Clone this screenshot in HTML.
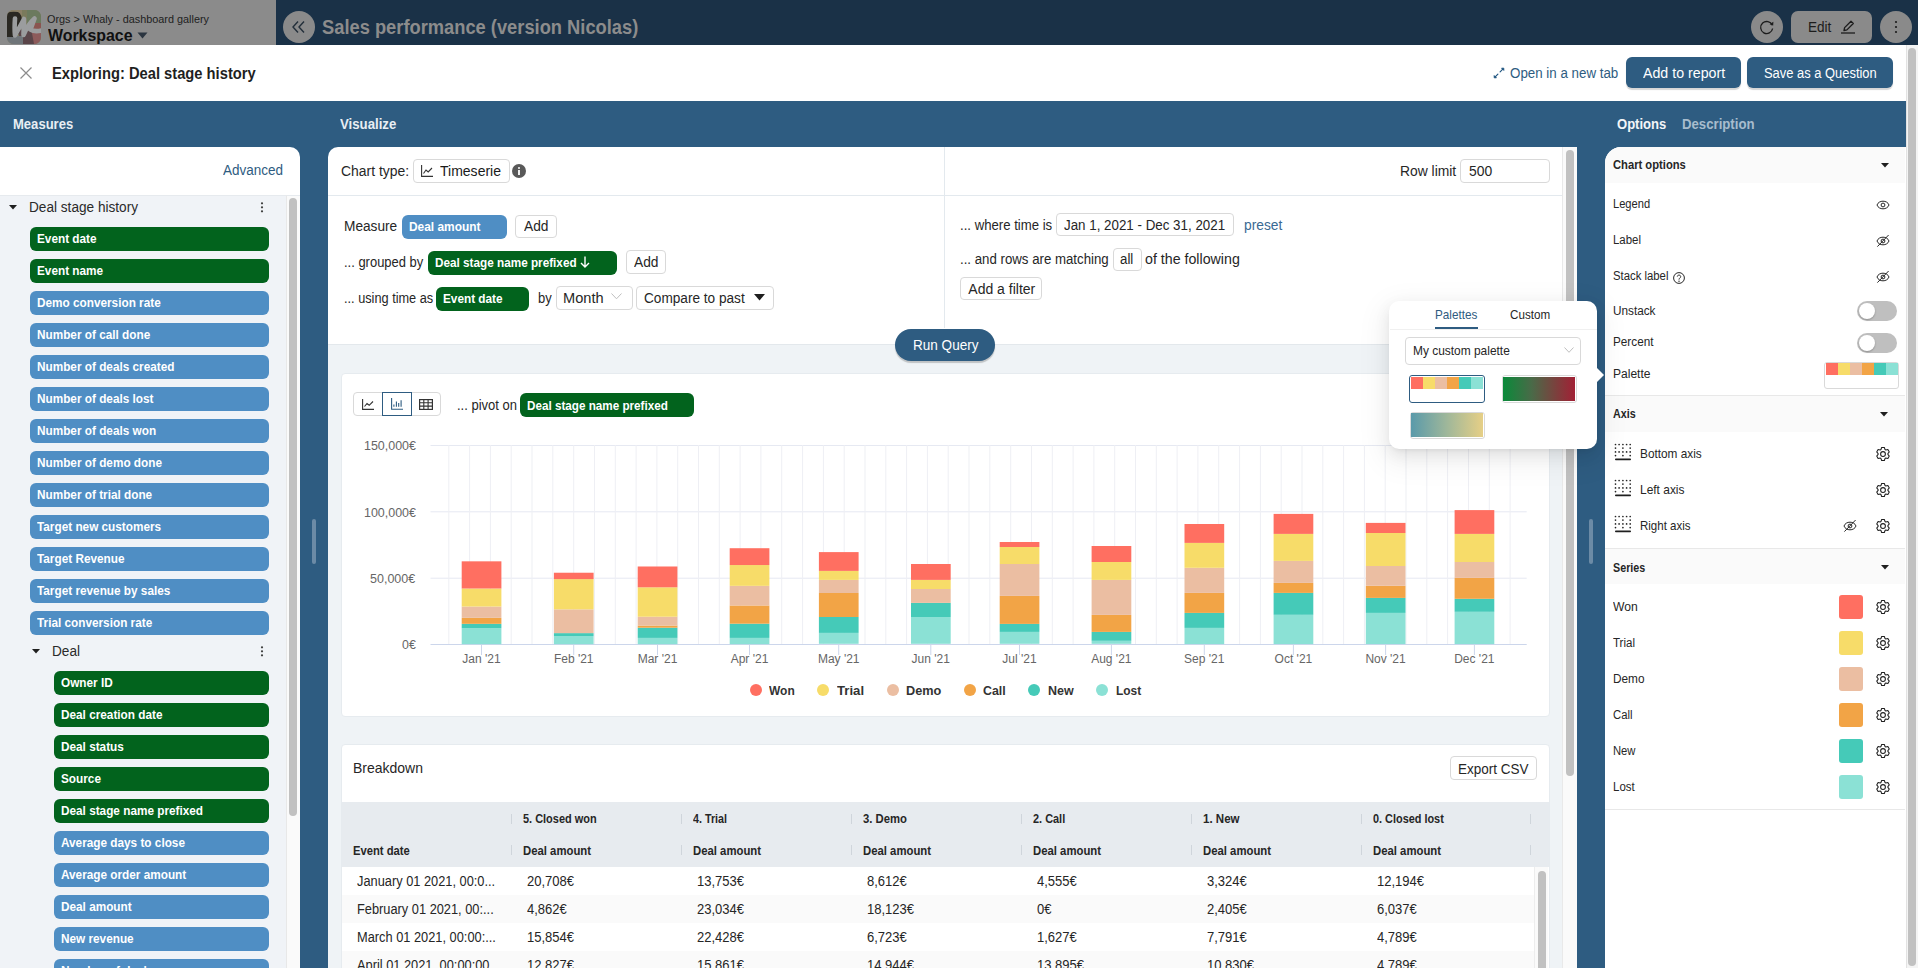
<!DOCTYPE html>
<html><head><meta charset="utf-8">
<style>
*{box-sizing:border-box;margin:0;padding:0}
html,body{width:1918px;height:968px;overflow:hidden;background:#fff;font-family:"Liberation Sans",sans-serif;color:#262626;position:relative}
.a{position:absolute}
.t{position:absolute;white-space:pre;line-height:1;transform-origin:0 0}
svg{position:absolute;overflow:visible}
</style></head><body>
<div class="a" style="left:0px;top:0px;width:1918px;height:45px;background:#1a3147"></div>
<div class="a" style="left:0px;top:0px;width:276px;height:45px;background:#8b8b8b"></div>
<svg style="left:7px;top:10px" width="34" height="34" viewBox="0 0 34 34">
<defs><clipPath id="lc"><rect x="0" y="0" width="34" height="34" rx="6.5"/></clipPath></defs>
<g clip-path="url(#lc)">
<rect x="0" y="0" width="34" height="34" fill="#7a7a5c"/>
<rect x="0" y="0" width="15" height="14" fill="#8a7f66"/>
<rect x="20" y="0" width="14" height="17" fill="#6b7a5e"/>
<rect x="23" y="13" width="11" height="8" fill="#8a5550"/>
<rect x="20" y="20" width="14" height="14" fill="#8d5b5b"/>
<path d="M12 20 L24 18 L27 34 L12 34Z" fill="#5a4549"/>
<rect x="0" y="26" width="16" height="8" fill="#6f7579"/>
<path d="M0 3 Q4 1 11 2 Q15 4 15 12 L12 24 L6 27 L0 27Z" fill="#2a2822"/>
<path d="M8 8.5 C7.5 15 7.5 21 8 25.5 L17 9 C17 15 16.5 21 16.5 25 C19.5 18 23.5 12 27.5 8.5 C26 13 24.5 16.5 23.5 19.5 C26.5 21.5 30 21.5 34.5 20.5" stroke="#9b9d9e" stroke-width="4.6" fill="none" stroke-linecap="round" stroke-linejoin="round"/>
</g></svg>
<div class="t" style="left:47.0px;top:13.7px;font-size:11px;color:#1e1e1e;transform:scaleX(0.9868);">Orgs &gt; Whaly - dashboard gallery</div>
<div class="t" style="left:47.5px;top:26.8px;font-size:16.5px;font-weight:700;color:#111;transform:scaleX(0.9630);">Workspace</div>
<svg style="left:137px;top:32px" width="11" height="7"><path d="M0.5 0.5 L10.5 0.5 L5.5 6.5Z" fill="#2b3540"/></svg>
<div class="a" style="left:283px;top:11px;width:32px;height:32px;background:#8a8a8a;border-radius:50%"></div>
<svg style="left:291px;top:20px" width="16" height="14"><path d="M7 1.5 L2 7 L7 12.5 M13 1.5 L8 7 L13 12.5" stroke="#232f3a" stroke-width="1.4" fill="none"/></svg>
<div class="t" style="left:321.5px;top:17.4px;font-size:20px;font-weight:700;color:#8c8c8c;transform:scaleX(0.9149);">Sales performance (version Nicolas)</div>
<div class="a" style="left:1751px;top:11px;width:32px;height:32px;background:#8a8a8a;border-radius:50%"></div>
<svg style="left:1759px;top:19px" width="16" height="16" viewBox="0 0 16 16"><path d="M13.2 6.2 A6 6 0 1 0 13.6 9.5" stroke="#1c1c1c" stroke-width="1.3" fill="none"/><path d="M10.6 5.2 L14.2 6.6 L14.4 2.8Z" fill="#1c1c1c"/></svg>
<div class="a" style="left:1791px;top:11px;width:81px;height:32px;background:#8a8a8a;border-radius:7px"></div>
<div class="t" style="left:1808.0px;top:19.9px;font-size:14.5px;color:#1c1c1c;transform:scaleX(0.9360);">Edit</div>
<svg style="left:1840px;top:19px" width="16" height="15" viewBox="0 0 16 15"><path d="M4 11.5 L4.6 8.6 L11 2.2 L13.3 4.5 L6.9 10.9 Z" stroke="#1c1c1c" stroke-width="1.3" fill="none" stroke-linejoin="round"/><path d="M1 14 H15" stroke="#1c1c1c" stroke-width="1.3"/></svg>
<div class="a" style="left:1880px;top:11px;width:32px;height:32px;background:#8a8a8a;border-radius:50%"></div>
<svg style="left:1894px;top:20px" width="4" height="14"><circle cx="2" cy="2" r="1.1" fill="#1c1c1c"/><circle cx="2" cy="7" r="1.1" fill="#1c1c1c"/><circle cx="2" cy="12" r="1.1" fill="#1c1c1c"/></svg>
<div class="a" style="left:0px;top:45px;width:1906px;height:56px;background:#fff"></div>
<svg style="left:20px;top:67px" width="12" height="12"><path d="M0.5 0.5 L11.5 11.5 M11.5 0.5 L0.5 11.5" stroke="#8c8c8c" stroke-width="1.2"/></svg>
<div class="t" style="left:52.4px;top:65.0px;font-size:16.5px;font-weight:700;color:#1f1f1f;transform:scaleX(0.8922);">Exploring: Deal stage history</div>
<svg style="left:1493px;top:67px" width="12" height="12" viewBox="0 0 12 12"><path d="M2.2 9.8 L4.9 7.1 M7.1 4.9 L9.8 2.2" stroke="#1f5580" stroke-width="1.2" stroke-linecap="round"/><path d="M1.2 8.6 L1.2 10.8 L3.4 10.8Z M8.6 1.2 L10.8 1.2 L10.8 3.4Z" fill="#1f5580" stroke="#1f5580" stroke-width="0.9" stroke-linejoin="round"/></svg>
<div class="t" style="left:1509.6px;top:66.1px;font-size:14px;color:#2e5c81;transform:scaleX(0.9530);">Open in a new tab</div>
<div class="a" style="left:1626px;top:57px;width:114.6px;height:31px;background:#2e5c81;border-radius:6px;box-shadow:0 2px 1px rgba(0,0,0,.16)"></div>
<div class="t" style="left:1642.5px;top:66.1px;font-size:14px;color:#fff;transform:scaleX(1.0144);">Add to report</div>
<div class="a" style="left:1747px;top:57px;width:145.7px;height:31px;background:#2e5c81;border-radius:6px;box-shadow:0 2px 1px rgba(0,0,0,.16)"></div>
<div class="t" style="left:1763.6px;top:66.1px;font-size:14px;color:#fff;transform:scaleX(0.9224);">Save as a Question</div>
<div class="a" style="left:1906px;top:45px;width:12px;height:923px;background:#f4f4f4;border-left:1px solid #e2e2e2"></div>
<div class="a" style="left:1908px;top:48px;width:8px;height:918px;background:#c1c1c1;border-radius:4px"></div>
<div class="a" style="left:0px;top:101px;width:1906px;height:867px;background:#2e5c81"></div>
<div class="t" style="left:12.5px;top:115.9px;font-size:15px;font-weight:700;color:#e8eef3;transform:scaleX(0.8697);">Measures</div>
<div class="t" style="left:340.1px;top:116.4px;font-size:15px;font-weight:700;color:#e8eef3;transform:scaleX(0.8805);">Visualize</div>
<div class="t" style="left:1617.3px;top:116.4px;font-size:15px;font-weight:700;color:#f2f5f8;transform:scaleX(0.8699);">Options</div>
<div class="t" style="left:1682.4px;top:116.4px;font-size:15px;font-weight:700;color:#a7bccd;transform:scaleX(0.8786);">Description</div>
<div class="a" style="left:0px;top:147px;width:300px;height:821px;background:#fff;border-top-right-radius:10px"></div>
<div class="t" style="left:223.3px;top:163.4px;font-size:14px;color:#2e5c81;transform:scaleX(0.9634);">Advanced</div>
<div class="a" style="left:0px;top:195px;width:286px;height:773px;background:#f0f3f7;border-top:1px solid #e6eaee"></div>
<div class="a" style="left:286px;top:195px;width:14px;height:773px;background:#fafafa;border-left:1px solid #e8e8e8;border-top:1px solid #e6eaee"></div>
<div class="a" style="left:289px;top:198px;width:8px;height:618px;background:#c1c1c1;border-radius:4px"></div>
<svg style="left:8.5px;top:205px" width="8" height="5"><path d="M0 0 H8 L4 4.5Z" fill="#1f1f1f"/></svg>
<div class="t" style="left:28.5px;top:199.8px;font-size:14px;color:#2a2a2a;transform:scaleX(0.9727);">Deal stage history</div>
<svg style="left:260px;top:201.5px" width="4" height="11"><circle cx="2" cy="1.3" r="1.1" fill="#3a3a3a"/><circle cx="2" cy="5.3" r="1.1" fill="#3a3a3a"/><circle cx="2" cy="9.3" r="1.1" fill="#3a3a3a"/></svg>
<div class="a" style="left:30px;top:227px;width:239px;height:24px;background:#02631d;border-radius:6px"></div>
<div class="t" style="left:36.8px;top:231.6px;font-size:13px;font-weight:700;color:#fff;transform:scaleX(0.906);">Event date</div>
<div class="a" style="left:30px;top:259px;width:239px;height:24px;background:#02631d;border-radius:6px"></div>
<div class="t" style="left:36.8px;top:263.6px;font-size:13px;font-weight:700;color:#fff;transform:scaleX(0.906);">Event name</div>
<div class="a" style="left:30px;top:291px;width:239px;height:24px;background:#4f8ec4;border-radius:6px"></div>
<div class="t" style="left:36.8px;top:295.6px;font-size:13px;font-weight:700;color:#fff;transform:scaleX(0.906);">Demo conversion rate</div>
<div class="a" style="left:30px;top:323px;width:239px;height:24px;background:#4f8ec4;border-radius:6px"></div>
<div class="t" style="left:36.8px;top:327.6px;font-size:13px;font-weight:700;color:#fff;transform:scaleX(0.906);">Number of call done</div>
<div class="a" style="left:30px;top:355px;width:239px;height:24px;background:#4f8ec4;border-radius:6px"></div>
<div class="t" style="left:36.8px;top:359.6px;font-size:13px;font-weight:700;color:#fff;transform:scaleX(0.906);">Number of deals created</div>
<div class="a" style="left:30px;top:387px;width:239px;height:24px;background:#4f8ec4;border-radius:6px"></div>
<div class="t" style="left:36.8px;top:391.6px;font-size:13px;font-weight:700;color:#fff;transform:scaleX(0.906);">Number of deals lost</div>
<div class="a" style="left:30px;top:419px;width:239px;height:24px;background:#4f8ec4;border-radius:6px"></div>
<div class="t" style="left:36.8px;top:423.6px;font-size:13px;font-weight:700;color:#fff;transform:scaleX(0.906);">Number of deals won</div>
<div class="a" style="left:30px;top:451px;width:239px;height:24px;background:#4f8ec4;border-radius:6px"></div>
<div class="t" style="left:36.8px;top:455.6px;font-size:13px;font-weight:700;color:#fff;transform:scaleX(0.906);">Number of demo done</div>
<div class="a" style="left:30px;top:483px;width:239px;height:24px;background:#4f8ec4;border-radius:6px"></div>
<div class="t" style="left:36.8px;top:487.6px;font-size:13px;font-weight:700;color:#fff;transform:scaleX(0.906);">Number of trial done</div>
<div class="a" style="left:30px;top:515px;width:239px;height:24px;background:#4f8ec4;border-radius:6px"></div>
<div class="t" style="left:36.8px;top:519.7px;font-size:13px;font-weight:700;color:#fff;transform:scaleX(0.906);">Target new customers</div>
<div class="a" style="left:30px;top:547px;width:239px;height:24px;background:#4f8ec4;border-radius:6px"></div>
<div class="t" style="left:36.8px;top:551.7px;font-size:13px;font-weight:700;color:#fff;transform:scaleX(0.906);">Target Revenue</div>
<div class="a" style="left:30px;top:579px;width:239px;height:24px;background:#4f8ec4;border-radius:6px"></div>
<div class="t" style="left:36.8px;top:583.7px;font-size:13px;font-weight:700;color:#fff;transform:scaleX(0.906);">Target revenue by sales</div>
<div class="a" style="left:30px;top:611px;width:239px;height:24px;background:#4f8ec4;border-radius:6px"></div>
<div class="t" style="left:36.8px;top:615.7px;font-size:13px;font-weight:700;color:#fff;transform:scaleX(0.906);">Trial conversion rate</div>
<svg style="left:32px;top:649px" width="8" height="5"><path d="M0 0 H8 L4 4.5Z" fill="#1f1f1f"/></svg>
<div class="t" style="left:52.1px;top:644.1px;font-size:14px;color:#2a2a2a;transform:scaleX(0.9723);">Deal</div>
<svg style="left:260px;top:645.5px" width="4" height="11"><circle cx="2" cy="1.3" r="1.1" fill="#3a3a3a"/><circle cx="2" cy="5.3" r="1.1" fill="#3a3a3a"/><circle cx="2" cy="9.3" r="1.1" fill="#3a3a3a"/></svg>
<div class="a" style="left:54px;top:671px;width:215px;height:24px;background:#02631d;border-radius:6px"></div>
<div class="t" style="left:60.8px;top:675.7px;font-size:13px;font-weight:700;color:#fff;transform:scaleX(0.906);">Owner ID</div>
<div class="a" style="left:54px;top:703px;width:215px;height:24px;background:#02631d;border-radius:6px"></div>
<div class="t" style="left:60.8px;top:707.7px;font-size:13px;font-weight:700;color:#fff;transform:scaleX(0.906);">Deal creation date</div>
<div class="a" style="left:54px;top:735px;width:215px;height:24px;background:#02631d;border-radius:6px"></div>
<div class="t" style="left:60.8px;top:739.7px;font-size:13px;font-weight:700;color:#fff;transform:scaleX(0.906);">Deal status</div>
<div class="a" style="left:54px;top:767px;width:215px;height:24px;background:#02631d;border-radius:6px"></div>
<div class="t" style="left:60.8px;top:771.7px;font-size:13px;font-weight:700;color:#fff;transform:scaleX(0.906);">Source</div>
<div class="a" style="left:54px;top:799px;width:215px;height:24px;background:#02631d;border-radius:6px"></div>
<div class="t" style="left:60.8px;top:803.7px;font-size:13px;font-weight:700;color:#fff;transform:scaleX(0.906);">Deal stage name prefixed</div>
<div class="a" style="left:54px;top:831px;width:215px;height:24px;background:#4f8ec4;border-radius:6px"></div>
<div class="t" style="left:60.8px;top:835.7px;font-size:13px;font-weight:700;color:#fff;transform:scaleX(0.906);">Average days to close</div>
<div class="a" style="left:54px;top:863px;width:215px;height:24px;background:#4f8ec4;border-radius:6px"></div>
<div class="t" style="left:60.8px;top:867.7px;font-size:13px;font-weight:700;color:#fff;transform:scaleX(0.906);">Average order amount</div>
<div class="a" style="left:54px;top:895px;width:215px;height:24px;background:#4f8ec4;border-radius:6px"></div>
<div class="t" style="left:60.8px;top:899.7px;font-size:13px;font-weight:700;color:#fff;transform:scaleX(0.906);">Deal amount</div>
<div class="a" style="left:54px;top:927px;width:215px;height:24px;background:#4f8ec4;border-radius:6px"></div>
<div class="t" style="left:60.8px;top:931.7px;font-size:13px;font-weight:700;color:#fff;transform:scaleX(0.906);">New revenue</div>
<div class="a" style="left:54px;top:959px;width:215px;height:24px;background:#4f8ec4;border-radius:6px"></div>
<div class="t" style="left:60.8px;top:963.7px;font-size:13px;font-weight:700;color:#fff;transform:scaleX(0.906);">Number of deals</div>
<div class="a" style="left:312px;top:519px;width:4px;height:45px;background:#6c8ba6;border-radius:2px"></div>
<div class="a" style="left:1589px;top:519px;width:4px;height:45px;background:#6c8ba6;border-radius:2px"></div>
<div class="a" style="left:328px;top:147px;width:1249px;height:821px;background:#fff;border-top-left-radius:10px"></div>
<div class="a" style="left:328px;top:195px;width:1234px;height:1px;background:#e3e9ee"></div>
<div class="a" style="left:944px;top:147px;width:1px;height:181px;background:#e3e9ee"></div>
<div class="a" style="left:328px;top:344px;width:1234px;height:624px;background:#eff3f6;border-top:1px solid #e3e8ec"></div>
<div class="a" style="left:1562px;top:147px;width:15px;height:821px;background:#fafafa;border-left:1px solid #e9e9e9"></div>
<div class="a" style="left:1566px;top:150px;width:8px;height:626px;background:#c1c1c1;border-radius:4px"></div>
<div class="t" style="left:340.5px;top:164.4px;font-size:14px;color:#262626;transform:scaleX(0.9944);">Chart type:</div>
<div class="a" style="left:412.5px;top:159px;width:97px;height:24px;background:#fff;border:1px solid #d9d9d9;border-radius:4px"></div>
<svg style="left:421px;top:165px" width="12" height="12" viewBox="0 0 12 12"><path d="M0.6 0 V11.4 H12" stroke="#333" stroke-width="1.1" fill="none"/><path d="M2.5 8.5 L5 5 L7.2 7 L11 3" stroke="#333" stroke-width="1.1" fill="none"/></svg>
<div class="t" style="left:440.3px;top:162.8px;font-size:15px;color:#1a1a1a;transform:scaleX(0.9342);">Timeserie</div>
<svg style="left:512px;top:164px" width="14" height="14"><circle cx="7" cy="7" r="7" fill="#595959"/><rect x="6.1" y="6" width="1.8" height="5" fill="#fff"/><circle cx="7" cy="4" r="1" fill="#fff"/></svg>
<div class="t" style="left:1400.4px;top:164.1px;font-size:14px;color:#262626;transform:scaleX(0.9898);">Row limit</div>
<div class="a" style="left:1460px;top:159px;width:90px;height:24px;background:#fff;border:1px solid #d9d9d9;border-radius:4px"></div>
<div class="t" style="left:1468.6px;top:164.1px;font-size:14px;color:#262626;transform:scaleX(0.9932);">500</div>
<div class="t" style="left:343.6px;top:219.2px;font-size:14px;color:#262626;transform:scaleX(0.9767);">Measure</div>
<div class="a" style="left:402px;top:215px;width:105px;height:24px;background:#4f8ec4;border-radius:6px"></div>
<div class="t" style="left:409.3px;top:220.0px;font-size:13px;font-weight:700;color:#fff;transform:scaleX(0.9165);">Deal amount</div>
<div class="a" style="left:515px;top:214.5px;width:42px;height:23px;background:#fff;border:1px solid #d9d9d9;border-radius:4px"></div>
<div class="t" style="left:523.5px;top:219.2px;font-size:14px;color:#262626;transform:scaleX(0.9831);">Add</div>
<div class="t" style="left:343.6px;top:255.4px;font-size:14px;color:#262626;transform:scaleX(0.9261);">... grouped by</div>
<div class="a" style="left:428px;top:251px;width:189px;height:24px;background:#02631d;border-radius:6px"></div>
<div class="t" style="left:435.1px;top:256.2px;font-size:13px;font-weight:700;color:#fff;transform:scaleX(0.9031);">Deal stage name prefixed</div>
<svg style="left:580px;top:256px" width="10" height="12" viewBox="0 0 10 12"><path d="M5 0.5 V11 M1 7 L5 11 L9 7" stroke="#fff" stroke-width="1.4" fill="none"/></svg>
<div class="a" style="left:626px;top:250px;width:40px;height:24px;background:#fff;border:1px solid #d9d9d9;border-radius:4px"></div>
<div class="t" style="left:633.5px;top:255.4px;font-size:14px;color:#262626;transform:scaleX(0.9831);">Add</div>
<div class="t" style="left:343.6px;top:291.4px;font-size:14px;color:#262626;transform:scaleX(0.9098);">... using time as</div>
<div class="a" style="left:436px;top:287px;width:93px;height:24px;background:#02631d;border-radius:6px"></div>
<div class="t" style="left:443.2px;top:292.2px;font-size:13px;font-weight:700;color:#fff;transform:scaleX(0.9065);">Event date</div>
<div class="t" style="left:537.9px;top:291.4px;font-size:14px;color:#262626;transform:scaleX(0.9259);">by</div>
<div class="a" style="left:555.5px;top:286px;width:77.5px;height:23.5px;background:#fff;border:1px solid #d9d9d9;border-radius:4px"></div>
<div class="t" style="left:563.4px;top:291.4px;font-size:14px;color:#262626;transform:scaleX(1.0431);">Month</div>
<svg style="left:611px;top:293px" width="11" height="7"><path d="M0.5 0.5 L5.5 5.8 L10.5 0.5" stroke="#bfbfbf" stroke-width="1" fill="none"/></svg>
<div class="a" style="left:636px;top:286px;width:138px;height:23.5px;background:#fff;border:1px solid #d9d9d9;border-radius:4px"></div>
<div class="t" style="left:644.4px;top:291.4px;font-size:14px;color:#262626;transform:scaleX(0.9729);">Compare to past</div>
<svg style="left:754px;top:294px" width="11" height="7"><path d="M0 0 H11 L5.5 6.5Z" fill="#1f1f1f"/></svg>
<div class="t" style="left:960.3px;top:218.2px;font-size:14px;color:#262626;transform:scaleX(0.9405);">... where time is</div>
<div class="a" style="left:1056.4px;top:213.3px;width:177.2px;height:23.2px;background:#fff;border:1px solid #d9d9d9;border-radius:4px"></div>
<div class="t" style="left:1064.0px;top:218.2px;font-size:14px;color:#262626;transform:scaleX(0.9538);">Jan 1, 2021 - Dec 31, 2021</div>
<div class="t" style="left:1243.7px;top:218.2px;font-size:14px;color:#3a6a93;transform:scaleX(0.9840);">preset</div>
<div class="t" style="left:960.3px;top:251.6px;font-size:14px;color:#262626;transform:scaleX(0.9460);">... and rows are matching</div>
<div class="a" style="left:1112.6px;top:247.5px;width:29px;height:23px;background:#fff;border:1px solid #d9d9d9;border-radius:4px"></div>
<div class="t" style="left:1120.2px;top:251.6px;font-size:14px;color:#262626;transform:scaleX(0.9489);">all</div>
<div class="t" style="left:1145.0px;top:251.6px;font-size:14px;color:#262626;transform:scaleX(1.0149);">of the following</div>
<div class="a" style="left:960.3px;top:277.3px;width:82.2px;height:23px;background:#fff;border:1px solid #d9d9d9;border-radius:4px"></div>
<div class="t" style="left:968.3px;top:282.2px;font-size:14px;color:#262626;">Add a filter</div>
<div class="a" style="left:895px;top:329px;width:100px;height:32px;background:#2e5c81;border-radius:16px;box-shadow:0 2px 1px rgba(0,0,0,.2)"></div>
<div class="t" style="left:912.5px;top:337.9px;font-size:14px;color:#fff;transform:scaleX(0.9675);">Run Query</div>
<div class="a" style="left:341px;top:373px;width:1209px;height:344px;background:#fff;border:1px solid #e6ebef;border-radius:4px"></div>
<div class="a" style="left:353px;top:392px;width:88px;height:24px;background:#fff;border:1px solid #d9d9d9;border-radius:4px"></div>
<div class="a" style="left:382px;top:392px;width:30px;height:24px;border:1px solid #2e5c81"></div>
<svg style="left:362px;top:399px" width="12" height="11" viewBox="0 0 12 11"><path d="M0.6 0 V10.4 H12" stroke="#333" stroke-width="1.1" fill="none"/><path d="M2.5 7.5 L5 4.5 L7.2 6.3 L11 2.5" stroke="#333" stroke-width="1.1" fill="none"/></svg>
<svg style="left:391px;top:398px" width="12" height="12" viewBox="0 0 12 12"><path d="M0.6 0 V11.2 H12" stroke="#2e5c81" stroke-width="1.1" fill="none"/><path d="M2.9 8.8 V6.4 M5.4 8.8 V3.4 M7.7 8.8 V5 M10.1 8.8 V2.2" stroke="#2e5c81" stroke-width="1.1"/></svg>
<svg style="left:419px;top:399px" width="14" height="11" viewBox="0 0 14 11"><rect x="0.6" y="0.6" width="12.8" height="9.8" stroke="#333" stroke-width="1.2" fill="none"/><path d="M0.6 3.8 H13.4 M0.6 7.1 H13.4 M4.8 0.6 V10.4 M9.1 0.6 V10.4" stroke="#333" stroke-width="1.1"/></svg>
<div class="t" style="left:456.7px;top:397.5px;font-size:14px;color:#262626;transform:scaleX(0.9289);">... pivot on</div>
<div class="a" style="left:520px;top:393px;width:174px;height:24px;background:#02631d;border-radius:6px"></div>
<div class="t" style="left:527.4px;top:398.6px;font-size:13px;font-weight:700;color:#fff;transform:scaleX(0.8980);">Deal stage name prefixed</div>
<svg style="left:0;top:0" width="1918" height="968"><rect x="430.5" y="445.0" width="1096.2" height="1" fill="#e6e9f2"/><rect x="430.5" y="511.3" width="1096.2" height="1" fill="#e6e9f2"/><rect x="430.5" y="577.7" width="1096.2" height="1" fill="#e6e9f2"/><rect x="448.3" y="445" width="1" height="199" fill="#eeeff4"/><rect x="469.1" y="445" width="1" height="199" fill="#eeeff4"/><rect x="489.9" y="445" width="1" height="199" fill="#eeeff4"/><rect x="510.7" y="445" width="1" height="199" fill="#eeeff4"/><rect x="531.5" y="445" width="1" height="199" fill="#eeeff4"/><rect x="552.3" y="445" width="1" height="199" fill="#eeeff4"/><rect x="573.2" y="445" width="1" height="199" fill="#eeeff4"/><rect x="594.0" y="445" width="1" height="199" fill="#eeeff4"/><rect x="614.8" y="445" width="1" height="199" fill="#eeeff4"/><rect x="635.6" y="445" width="1" height="199" fill="#eeeff4"/><rect x="656.4" y="445" width="1" height="199" fill="#eeeff4"/><rect x="677.2" y="445" width="1" height="199" fill="#eeeff4"/><rect x="698.0" y="445" width="1" height="199" fill="#eeeff4"/><rect x="718.8" y="445" width="1" height="199" fill="#eeeff4"/><rect x="739.6" y="445" width="1" height="199" fill="#eeeff4"/><rect x="760.4" y="445" width="1" height="199" fill="#eeeff4"/><rect x="781.2" y="445" width="1" height="199" fill="#eeeff4"/><rect x="802.1" y="445" width="1" height="199" fill="#eeeff4"/><rect x="822.9" y="445" width="1" height="199" fill="#eeeff4"/><rect x="843.7" y="445" width="1" height="199" fill="#eeeff4"/><rect x="864.5" y="445" width="1" height="199" fill="#eeeff4"/><rect x="885.3" y="445" width="1" height="199" fill="#eeeff4"/><rect x="906.1" y="445" width="1" height="199" fill="#eeeff4"/><rect x="926.9" y="445" width="1" height="199" fill="#eeeff4"/><rect x="947.7" y="445" width="1" height="199" fill="#eeeff4"/><rect x="968.5" y="445" width="1" height="199" fill="#eeeff4"/><rect x="989.3" y="445" width="1" height="199" fill="#eeeff4"/><rect x="1010.2" y="445" width="1" height="199" fill="#eeeff4"/><rect x="1031.0" y="445" width="1" height="199" fill="#eeeff4"/><rect x="1051.8" y="445" width="1" height="199" fill="#eeeff4"/><rect x="1072.6" y="445" width="1" height="199" fill="#eeeff4"/><rect x="1093.4" y="445" width="1" height="199" fill="#eeeff4"/><rect x="1114.2" y="445" width="1" height="199" fill="#eeeff4"/><rect x="1135.0" y="445" width="1" height="199" fill="#eeeff4"/><rect x="1155.8" y="445" width="1" height="199" fill="#eeeff4"/><rect x="1176.6" y="445" width="1" height="199" fill="#eeeff4"/><rect x="1197.4" y="445" width="1" height="199" fill="#eeeff4"/><rect x="1218.2" y="445" width="1" height="199" fill="#eeeff4"/><rect x="1239.1" y="445" width="1" height="199" fill="#eeeff4"/><rect x="1259.9" y="445" width="1" height="199" fill="#eeeff4"/><rect x="1280.7" y="445" width="1" height="199" fill="#eeeff4"/><rect x="1301.5" y="445" width="1" height="199" fill="#eeeff4"/><rect x="1322.3" y="445" width="1" height="199" fill="#eeeff4"/><rect x="1343.1" y="445" width="1" height="199" fill="#eeeff4"/><rect x="1363.9" y="445" width="1" height="199" fill="#eeeff4"/><rect x="1384.7" y="445" width="1" height="199" fill="#eeeff4"/><rect x="1405.5" y="445" width="1" height="199" fill="#eeeff4"/><rect x="1426.3" y="445" width="1" height="199" fill="#eeeff4"/><rect x="1447.1" y="445" width="1" height="199" fill="#eeeff4"/><rect x="1468.0" y="445" width="1" height="199" fill="#eeeff4"/><rect x="1488.8" y="445" width="1" height="199" fill="#eeeff4"/><rect x="1509.6" y="445" width="1" height="199" fill="#eeeff4"/><rect x="430.5" y="644" width="1096.2" height="1" fill="#ccd6eb"/><rect x="481.0" y="645" width="1" height="10" fill="#ccd6eb"/><rect x="573.2" y="645" width="1" height="10" fill="#ccd6eb"/><rect x="657.0" y="645" width="1" height="10" fill="#ccd6eb"/><rect x="749.0" y="645" width="1" height="10" fill="#ccd6eb"/><rect x="838.2" y="645" width="1" height="10" fill="#ccd6eb"/><rect x="930.3" y="645" width="1" height="10" fill="#ccd6eb"/><rect x="1019.0" y="645" width="1" height="10" fill="#ccd6eb"/><rect x="1110.9" y="645" width="1" height="10" fill="#ccd6eb"/><rect x="1203.8" y="645" width="1" height="10" fill="#ccd6eb"/><rect x="1292.9" y="645" width="1" height="10" fill="#ccd6eb"/><rect x="1385.1" y="645" width="1" height="10" fill="#ccd6eb"/><rect x="1473.9" y="645" width="1" height="10" fill="#ccd6eb"/><rect x="461.7" y="628.20" width="39.7" height="16.00" fill="#8be1d5"/><rect x="461.7" y="623.84" width="39.7" height="4.36" fill="#45cab8"/><rect x="461.7" y="617.86" width="39.7" height="5.98" fill="#f2a446"/><rect x="461.7" y="606.56" width="39.7" height="11.30" fill="#ebbea2"/><rect x="461.7" y="588.51" width="39.7" height="18.05" fill="#f7dc69"/><rect x="461.7" y="561.33" width="39.7" height="27.18" fill="#ff6f61"/><rect x="553.9" y="636.28" width="39.7" height="7.92" fill="#8be1d5"/><rect x="553.9" y="633.12" width="39.7" height="3.16" fill="#45cab8"/><rect x="553.9" y="609.34" width="39.7" height="23.78" fill="#ebbea2"/><rect x="553.9" y="579.11" width="39.7" height="30.23" fill="#f7dc69"/><rect x="553.9" y="572.73" width="39.7" height="6.38" fill="#ff6f61"/><rect x="637.7" y="637.92" width="39.7" height="6.28" fill="#8be1d5"/><rect x="637.7" y="627.69" width="39.7" height="10.22" fill="#45cab8"/><rect x="637.7" y="625.56" width="39.7" height="2.14" fill="#f2a446"/><rect x="637.7" y="616.73" width="39.7" height="8.82" fill="#ebbea2"/><rect x="637.7" y="587.30" width="39.7" height="29.43" fill="#f7dc69"/><rect x="637.7" y="566.49" width="39.7" height="20.81" fill="#ff6f61"/><rect x="729.7" y="637.92" width="39.7" height="6.28" fill="#8be1d5"/><rect x="729.7" y="623.70" width="39.7" height="14.21" fill="#45cab8"/><rect x="729.7" y="605.47" width="39.7" height="18.23" fill="#f2a446"/><rect x="729.7" y="585.86" width="39.7" height="19.61" fill="#ebbea2"/><rect x="729.7" y="565.04" width="39.7" height="20.81" fill="#f7dc69"/><rect x="729.7" y="548.21" width="39.7" height="16.83" fill="#ff6f61"/><rect x="818.9" y="632.90" width="39.7" height="10.90" fill="#8be1d5"/><rect x="818.9" y="617.00" width="39.7" height="15.90" fill="#45cab8"/><rect x="818.9" y="593.00" width="39.7" height="24.00" fill="#f2a446"/><rect x="818.9" y="579.90" width="39.7" height="13.10" fill="#ebbea2"/><rect x="818.9" y="570.90" width="39.7" height="9.00" fill="#f7dc69"/><rect x="818.9" y="552.10" width="39.7" height="18.80" fill="#ff6f61"/><rect x="911.0" y="617.00" width="39.7" height="26.80" fill="#8be1d5"/><rect x="911.0" y="602.90" width="39.7" height="14.10" fill="#45cab8"/><rect x="911.0" y="589.00" width="39.7" height="13.90" fill="#ebbea2"/><rect x="911.0" y="579.90" width="39.7" height="9.10" fill="#f7dc69"/><rect x="911.0" y="564.00" width="39.7" height="15.90" fill="#ff6f61"/><rect x="999.7" y="631.90" width="39.7" height="11.90" fill="#8be1d5"/><rect x="999.7" y="623.90" width="39.7" height="8.00" fill="#45cab8"/><rect x="999.7" y="595.90" width="39.7" height="28.00" fill="#f2a446"/><rect x="999.7" y="564.00" width="39.7" height="31.90" fill="#ebbea2"/><rect x="999.7" y="547.00" width="39.7" height="17.00" fill="#f7dc69"/><rect x="999.7" y="542.00" width="39.7" height="5.00" fill="#ff6f61"/><rect x="1091.6" y="640.80" width="39.7" height="3.00" fill="#8be1d5"/><rect x="1091.6" y="631.90" width="39.7" height="8.90" fill="#45cab8"/><rect x="1091.6" y="614.90" width="39.7" height="17.00" fill="#f2a446"/><rect x="1091.6" y="579.90" width="39.7" height="35.00" fill="#ebbea2"/><rect x="1091.6" y="562.00" width="39.7" height="17.90" fill="#f7dc69"/><rect x="1091.6" y="546.00" width="39.7" height="16.00" fill="#ff6f61"/><rect x="1184.5" y="627.90" width="39.7" height="16.20" fill="#8be1d5"/><rect x="1184.5" y="612.90" width="39.7" height="15.00" fill="#45cab8"/><rect x="1184.5" y="592.90" width="39.7" height="20.00" fill="#f2a446"/><rect x="1184.5" y="567.80" width="39.7" height="25.10" fill="#ebbea2"/><rect x="1184.5" y="542.90" width="39.7" height="24.90" fill="#f7dc69"/><rect x="1184.5" y="524.00" width="39.7" height="18.90" fill="#ff6f61"/><rect x="1273.6" y="614.80" width="39.7" height="29.30" fill="#8be1d5"/><rect x="1273.6" y="592.90" width="39.7" height="21.90" fill="#45cab8"/><rect x="1273.6" y="582.90" width="39.7" height="10.00" fill="#f2a446"/><rect x="1273.6" y="560.90" width="39.7" height="22.00" fill="#ebbea2"/><rect x="1273.6" y="533.90" width="39.7" height="27.00" fill="#f7dc69"/><rect x="1273.6" y="513.90" width="39.7" height="20.00" fill="#ff6f61"/><rect x="1365.8" y="612.90" width="39.7" height="31.20" fill="#8be1d5"/><rect x="1365.8" y="597.90" width="39.7" height="15.00" fill="#45cab8"/><rect x="1365.8" y="585.80" width="39.7" height="12.10" fill="#f2a446"/><rect x="1365.8" y="566.00" width="39.7" height="19.80" fill="#ebbea2"/><rect x="1365.8" y="533.00" width="39.7" height="33.00" fill="#f7dc69"/><rect x="1365.8" y="522.90" width="39.7" height="10.10" fill="#ff6f61"/><rect x="1454.6" y="611.80" width="39.7" height="32.30" fill="#8be1d5"/><rect x="1454.6" y="598.80" width="39.7" height="13.00" fill="#45cab8"/><rect x="1454.6" y="577.90" width="39.7" height="20.90" fill="#f2a446"/><rect x="1454.6" y="562.00" width="39.7" height="15.90" fill="#ebbea2"/><rect x="1454.6" y="533.90" width="39.7" height="28.10" fill="#f7dc69"/><rect x="1454.6" y="510.10" width="39.7" height="23.80" fill="#ff6f61"/></svg>
<div class="t" style="left:363.5px;top:440.3px;font-size:12px;color:#666;transform:scaleX(1.0387);">150,000€</div>
<div class="t" style="left:363.5px;top:506.6px;font-size:12px;color:#666;transform:scaleX(1.0387);">100,000€</div>
<div class="t" style="left:370.3px;top:573.0px;font-size:12px;color:#666;transform:scaleX(1.0417);">50,000€</div>
<div class="t" style="left:401.7px;top:639.3px;font-size:12px;color:#666;transform:scaleX(1.0330);">0€</div>
<div class="t" style="left:462.3px;top:653.0px;font-size:12px;color:#666;">Jan '21</div>
<div class="t" style="left:553.9px;top:653.0px;font-size:12px;color:#666;">Feb '21</div>
<div class="t" style="left:637.7px;top:653.0px;font-size:12px;color:#666;">Mar '21</div>
<div class="t" style="left:730.7px;top:653.0px;font-size:12px;color:#666;">Apr '21</div>
<div class="t" style="left:817.9px;top:653.0px;font-size:12px;color:#666;">May '21</div>
<div class="t" style="left:911.6px;top:653.0px;font-size:12px;color:#666;">Jun '21</div>
<div class="t" style="left:1002.3px;top:653.0px;font-size:12px;color:#666;">Jul '21</div>
<div class="t" style="left:1091.2px;top:653.0px;font-size:12px;color:#666;">Aug '21</div>
<div class="t" style="left:1184.1px;top:653.0px;font-size:12px;color:#666;">Sep '21</div>
<div class="t" style="left:1274.6px;top:653.0px;font-size:12px;color:#666;">Oct '21</div>
<div class="t" style="left:1365.4px;top:653.0px;font-size:12px;color:#666;">Nov '21</div>
<div class="t" style="left:1454.2px;top:653.0px;font-size:12px;color:#666;">Dec '21</div>
<svg style="left:750px;top:684px" width="12" height="12"><circle cx="6" cy="6" r="6" fill="#ff6f61"/></svg>
<div class="t" style="left:769.3px;top:683.8px;font-size:13px;font-weight:700;color:#333;transform:scaleX(0.9204);">Won</div>
<svg style="left:817.4px;top:684px" width="12" height="12"><circle cx="6" cy="6" r="6" fill="#f7dc69"/></svg>
<div class="t" style="left:837.3px;top:683.8px;font-size:13px;font-weight:700;color:#333;transform:scaleX(1.0131);">Trial</div>
<svg style="left:886.8px;top:684px" width="12" height="12"><circle cx="6" cy="6" r="6" fill="#ebbea2"/></svg>
<div class="t" style="left:906.3px;top:683.8px;font-size:13px;font-weight:700;color:#333;transform:scaleX(0.9772);">Demo</div>
<svg style="left:963.8px;top:684px" width="12" height="12"><circle cx="6" cy="6" r="6" fill="#f2a446"/></svg>
<div class="t" style="left:983.0px;top:683.8px;font-size:13px;font-weight:700;color:#333;transform:scaleX(0.9520);">Call</div>
<svg style="left:1028.4px;top:684px" width="12" height="12"><circle cx="6" cy="6" r="6" fill="#45cab8"/></svg>
<div class="t" style="left:1047.8px;top:683.8px;font-size:13px;font-weight:700;color:#333;transform:scaleX(0.9613);">New</div>
<svg style="left:1095.9px;top:684px" width="12" height="12"><circle cx="6" cy="6" r="6" fill="#8be1d5"/></svg>
<div class="t" style="left:1115.6px;top:683.8px;font-size:13px;font-weight:700;color:#333;transform:scaleX(0.9179);">Lost</div>
<div class="a" style="left:341px;top:743.5px;width:1209px;height:230px;background:#fff;border:1px solid #e6ebef;border-radius:4px"></div>
<div class="t" style="left:353.0px;top:759.9px;font-size:15px;color:#262626;transform:scaleX(0.9328);">Breakdown</div>
<div class="a" style="left:1450px;top:755.8px;width:87px;height:24px;background:#fff;border:1px solid #d9d9d9;border-radius:4px"></div>
<div class="t" style="left:1458.3px;top:761.6px;font-size:14px;color:#262626;transform:scaleX(0.9639);">Export CSV</div>
<div class="a" style="left:342px;top:802px;width:1207px;height:65px;background:#e7ebef"></div>
<div class="a" style="left:510.5px;top:813.5px;width:1px;height:10px;background:#cfd5db"></div>
<div class="a" style="left:510.5px;top:845px;width:1px;height:10px;background:#cfd5db"></div>
<div class="a" style="left:680.5px;top:813.5px;width:1px;height:10px;background:#cfd5db"></div>
<div class="a" style="left:680.5px;top:845px;width:1px;height:10px;background:#cfd5db"></div>
<div class="a" style="left:850.5px;top:813.5px;width:1px;height:10px;background:#cfd5db"></div>
<div class="a" style="left:850.5px;top:845px;width:1px;height:10px;background:#cfd5db"></div>
<div class="a" style="left:1020.5px;top:813.5px;width:1px;height:10px;background:#cfd5db"></div>
<div class="a" style="left:1020.5px;top:845px;width:1px;height:10px;background:#cfd5db"></div>
<div class="a" style="left:1190.5px;top:813.5px;width:1px;height:10px;background:#cfd5db"></div>
<div class="a" style="left:1190.5px;top:845px;width:1px;height:10px;background:#cfd5db"></div>
<div class="a" style="left:1360.5px;top:813.5px;width:1px;height:10px;background:#cfd5db"></div>
<div class="a" style="left:1360.5px;top:845px;width:1px;height:10px;background:#cfd5db"></div>
<div class="a" style="left:1530px;top:813.5px;width:1px;height:10px;background:#cfd5db"></div>
<div class="a" style="left:1530px;top:845px;width:1px;height:10px;background:#cfd5db"></div>
<div class="t" style="left:523.2px;top:812.9px;font-size:12.5px;font-weight:700;color:#262626;transform:scaleX(0.8757);">5. Closed won</div>
<div class="t" style="left:523.2px;top:844.7px;font-size:12.5px;font-weight:700;color:#262626;transform:scaleX(0.9065);">Deal amount</div>
<div class="t" style="left:693.2px;top:812.9px;font-size:12.5px;font-weight:700;color:#262626;transform:scaleX(0.8584);">4. Trial</div>
<div class="t" style="left:693.2px;top:844.7px;font-size:12.5px;font-weight:700;color:#262626;transform:scaleX(0.9065);">Deal amount</div>
<div class="t" style="left:863.2px;top:812.9px;font-size:12.5px;font-weight:700;color:#262626;transform:scaleX(0.9046);">3. Demo</div>
<div class="t" style="left:863.2px;top:844.7px;font-size:12.5px;font-weight:700;color:#262626;transform:scaleX(0.9065);">Deal amount</div>
<div class="t" style="left:1033.2px;top:812.9px;font-size:12.5px;font-weight:700;color:#262626;transform:scaleX(0.8743);">2. Call</div>
<div class="t" style="left:1033.2px;top:844.7px;font-size:12.5px;font-weight:700;color:#262626;transform:scaleX(0.9065);">Deal amount</div>
<div class="t" style="left:1203.2px;top:812.9px;font-size:12.5px;font-weight:700;color:#262626;transform:scaleX(0.9240);">1. New</div>
<div class="t" style="left:1203.2px;top:844.7px;font-size:12.5px;font-weight:700;color:#262626;transform:scaleX(0.9065);">Deal amount</div>
<div class="t" style="left:1373.2px;top:812.9px;font-size:12.5px;font-weight:700;color:#262626;transform:scaleX(0.8710);">0. Closed lost</div>
<div class="t" style="left:1373.2px;top:844.7px;font-size:12.5px;font-weight:700;color:#262626;transform:scaleX(0.9065);">Deal amount</div>
<div class="t" style="left:353.0px;top:844.7px;font-size:12.5px;font-weight:700;color:#262626;transform:scaleX(0.8985);">Event date</div>
<div class="a" style="left:342px;top:867px;width:1192px;height:28px;background:#fff"></div>
<div class="a" style="left:342px;top:895px;width:1192px;height:28px;background:#fafafa"></div>
<div class="a" style="left:342px;top:923px;width:1192px;height:28px;background:#fff"></div>
<div class="a" style="left:342px;top:951px;width:1192px;height:28px;background:#fafafa"></div>
<div class="t" style="left:356.9px;top:874.1px;font-size:14px;color:#262626;transform:scaleX(0.915);">January 01 2021, 00:0...</div>
<div class="t" style="left:527.1px;top:874.1px;font-size:14px;color:#262626;transform:scaleX(0.93);">20,708€</div>
<div class="t" style="left:697.1px;top:874.1px;font-size:14px;color:#262626;transform:scaleX(0.93);">13,753€</div>
<div class="t" style="left:867.1px;top:874.1px;font-size:14px;color:#262626;transform:scaleX(0.93);">8,612€</div>
<div class="t" style="left:1037.1px;top:874.1px;font-size:14px;color:#262626;transform:scaleX(0.93);">4,555€</div>
<div class="t" style="left:1207.1px;top:874.1px;font-size:14px;color:#262626;transform:scaleX(0.93);">3,324€</div>
<div class="t" style="left:1377.1px;top:874.1px;font-size:14px;color:#262626;transform:scaleX(0.93);">12,194€</div>
<div class="t" style="left:356.9px;top:902.1px;font-size:14px;color:#262626;transform:scaleX(0.915);">February 01 2021, 00:...</div>
<div class="t" style="left:527.1px;top:902.1px;font-size:14px;color:#262626;transform:scaleX(0.93);">4,862€</div>
<div class="t" style="left:697.1px;top:902.1px;font-size:14px;color:#262626;transform:scaleX(0.93);">23,034€</div>
<div class="t" style="left:867.1px;top:902.1px;font-size:14px;color:#262626;transform:scaleX(0.93);">18,123€</div>
<div class="t" style="left:1037.1px;top:902.1px;font-size:14px;color:#262626;transform:scaleX(0.93);">0€</div>
<div class="t" style="left:1207.1px;top:902.1px;font-size:14px;color:#262626;transform:scaleX(0.93);">2,405€</div>
<div class="t" style="left:1377.1px;top:902.1px;font-size:14px;color:#262626;transform:scaleX(0.93);">6,037€</div>
<div class="t" style="left:356.9px;top:930.1px;font-size:14px;color:#262626;transform:scaleX(0.915);">March 01 2021, 00:00:...</div>
<div class="t" style="left:527.1px;top:930.1px;font-size:14px;color:#262626;transform:scaleX(0.93);">15,854€</div>
<div class="t" style="left:697.1px;top:930.1px;font-size:14px;color:#262626;transform:scaleX(0.93);">22,428€</div>
<div class="t" style="left:867.1px;top:930.1px;font-size:14px;color:#262626;transform:scaleX(0.93);">6,723€</div>
<div class="t" style="left:1037.1px;top:930.1px;font-size:14px;color:#262626;transform:scaleX(0.93);">1,627€</div>
<div class="t" style="left:1207.1px;top:930.1px;font-size:14px;color:#262626;transform:scaleX(0.93);">7,791€</div>
<div class="t" style="left:1377.1px;top:930.1px;font-size:14px;color:#262626;transform:scaleX(0.93);">4,789€</div>
<div class="t" style="left:356.9px;top:958.1px;font-size:14px;color:#262626;transform:scaleX(0.915);">April 01 2021, 00:00:00</div>
<div class="t" style="left:527.1px;top:958.1px;font-size:14px;color:#262626;transform:scaleX(0.93);">12,827€</div>
<div class="t" style="left:697.1px;top:958.1px;font-size:14px;color:#262626;transform:scaleX(0.93);">15,861€</div>
<div class="t" style="left:867.1px;top:958.1px;font-size:14px;color:#262626;transform:scaleX(0.93);">14,944€</div>
<div class="t" style="left:1037.1px;top:958.1px;font-size:14px;color:#262626;transform:scaleX(0.93);">13,895€</div>
<div class="t" style="left:1207.1px;top:958.1px;font-size:14px;color:#262626;transform:scaleX(0.93);">10,830€</div>
<div class="t" style="left:1377.1px;top:958.1px;font-size:14px;color:#262626;transform:scaleX(0.93);">4,789€</div>
<div class="a" style="left:1534px;top:867px;width:14px;height:101px;background:#fafafa;border-left:1px solid #ededed"></div>
<div class="a" style="left:1538px;top:871px;width:7.5px;height:100px;background:#c1c1c1;border-radius:4px"></div>
<div class="a" style="left:1605px;top:147px;width:301px;height:821px;background:#fff;border-top-left-radius:16px;overflow:hidden"></div>
<div class="a" style="left:1605px;top:147px;width:300px;height:36px;background:#fafafa;border-top-left-radius:16px"></div>
<div class="t" style="left:1613.3px;top:158.3px;font-size:13px;font-weight:700;color:#262626;transform:scaleX(0.8615);">Chart options</div>
<svg style="left:1880.5px;top:162.5px" width="8" height="5"><path d="M0 0 H8 L4 4.5Z" fill="#1f1f1f"/></svg>
<div class="t" style="left:1613.3px;top:198.4px;font-size:12.5px;color:#262626;transform:scaleX(0.8893);">Legend</div>
<svg style="left:1876px;top:199px" width="14" height="12" viewBox="0 0 14 12"><path d="M1 6 C2.8 0.9 11.2 0.9 13 6 C11.2 11.1 2.8 11.1 1 6Z" stroke="#262626" stroke-width="1" fill="none"/><circle cx="7" cy="6" r="1.9" stroke="#262626" stroke-width="1" fill="none"/></svg>
<div class="t" style="left:1613.3px;top:234.4px;font-size:12.5px;color:#262626;transform:scaleX(0.9152);">Label</div>
<svg style="left:1876px;top:235px" width="14" height="12" viewBox="0 0 14 12"><path d="M1 6 C2.8 0.9 11.2 0.9 13 6 C11.2 11.1 2.8 11.1 1 6Z" stroke="#262626" stroke-width="1" fill="none"/><circle cx="7" cy="6" r="1.9" stroke="#262626" stroke-width="1" fill="none"/><path d="M12.6 0 L1.4 11.6" stroke="#262626" stroke-width="1"/></svg>
<div class="t" style="left:1613.3px;top:270.4px;font-size:12.5px;color:#262626;transform:scaleX(0.9059);">Stack label</div>
<svg style="left:1673px;top:271.5px" width="12" height="12" viewBox="0 0 12 12"><circle cx="6" cy="6" r="5.4" stroke="#262626" stroke-width="1" fill="none"/><path d="M4.3 4.6 C4.3 2.6 7.7 2.6 7.7 4.6 C7.7 6 6 6 6 7.6" stroke="#262626" stroke-width="1" fill="none"/><circle cx="6" cy="9.2" r="0.7" fill="#262626"/></svg>
<svg style="left:1876px;top:271px" width="14" height="12" viewBox="0 0 14 12"><path d="M1 6 C2.8 0.9 11.2 0.9 13 6 C11.2 11.1 2.8 11.1 1 6Z" stroke="#262626" stroke-width="1" fill="none"/><circle cx="7" cy="6" r="1.9" stroke="#262626" stroke-width="1" fill="none"/><path d="M12.6 0 L1.4 11.6" stroke="#262626" stroke-width="1"/></svg>
<div class="t" style="left:1613.3px;top:304.7px;font-size:12.5px;color:#262626;transform:scaleX(0.9412);">Unstack</div>
<div class="a" style="left:1857px;top:300.7px;width:40px;height:20px;background:#bfbfbf;border-radius:10px"></div>
<div class="a" style="left:1859px;top:302.7px;width:16px;height:16px;background:#fff;border-radius:50%;box-shadow:0 1px 2px rgba(0,0,0,.25)"></div>
<div class="t" style="left:1613.3px;top:336.3px;font-size:12.5px;color:#262626;transform:scaleX(0.9398);">Percent</div>
<div class="a" style="left:1857px;top:333px;width:40px;height:20px;background:#bfbfbf;border-radius:10px"></div>
<div class="a" style="left:1859px;top:335px;width:16px;height:16px;background:#fff;border-radius:50%;box-shadow:0 1px 2px rgba(0,0,0,.25)"></div>
<div class="t" style="left:1613.3px;top:368.2px;font-size:12.5px;color:#262626;transform:scaleX(0.9635);">Palette</div>
<div class="a" style="left:1824px;top:362px;width:74.5px;height:26.5px;background:#fff;border:1px solid #d9d9d9;border-radius:3px"></div>
<div class="a" style="left:1825.5px;top:363px;width:12px;height:12px;background:#ff6f61"></div>
<div class="a" style="left:1837.5px;top:363px;width:12px;height:12px;background:#f7dc69"></div>
<div class="a" style="left:1849.5px;top:363px;width:12px;height:12px;background:#ebbea2"></div>
<div class="a" style="left:1861.5px;top:363px;width:12px;height:12px;background:#f2a446"></div>
<div class="a" style="left:1873.5px;top:363px;width:12px;height:12px;background:#45cab8"></div>
<div class="a" style="left:1885.5px;top:363px;width:12px;height:12px;background:#8be1d5"></div>
<div class="a" style="left:1605px;top:395px;width:300px;height:1px;background:#e8e8e8"></div>
<div class="a" style="left:1605px;top:396px;width:300px;height:36px;background:#fafafa"></div>
<div class="t" style="left:1613.4px;top:407.1px;font-size:13px;font-weight:700;color:#262626;transform:scaleX(0.8264);">Axis</div>
<svg style="left:1880px;top:412px" width="8" height="5"><path d="M0 0 H8 L4 4.5Z" fill="#1f1f1f"/></svg>
<svg style="left:1614px;top:443px" width="18" height="18" viewBox="0 0 18 18"><circle cx="1.5" cy="1.5" r="0.85" fill="#262626"/><circle cx="5.1" cy="1.5" r="0.85" fill="#262626"/><circle cx="8.9" cy="1.5" r="0.85" fill="#262626"/><circle cx="12.6" cy="1.5" r="0.85" fill="#262626"/><circle cx="16.2" cy="1.5" r="0.85" fill="#262626"/><circle cx="1.5" cy="5.1" r="0.85" fill="#262626"/><circle cx="8.9" cy="5.1" r="0.85" fill="#262626"/><circle cx="16.2" cy="5.1" r="0.85" fill="#262626"/><circle cx="1.5" cy="8.9" r="0.85" fill="#262626"/><circle cx="5.1" cy="8.9" r="0.85" fill="#262626"/><circle cx="8.9" cy="8.9" r="0.85" fill="#262626"/><circle cx="12.6" cy="8.9" r="0.85" fill="#262626"/><circle cx="16.2" cy="8.9" r="0.85" fill="#262626"/><circle cx="1.5" cy="12.6" r="0.85" fill="#262626"/><circle cx="8.9" cy="12.6" r="0.85" fill="#262626"/><circle cx="16.2" cy="12.6" r="0.85" fill="#262626"/><rect x="1" y="15.6" width="16" height="1.6" rx="0.8" fill="#1f1f1f"/></svg>
<div class="t" style="left:1639.5px;top:447.2px;font-size:13px;color:#262626;transform:scaleX(0.9084);">Bottom axis</div>
<svg style="left:1876.2px;top:446.8px" width="14" height="14" viewBox="0 0 14 14"><path d="M4.93 2.56 L5.63 0.54 L8.37 0.54 L9.07 2.56 L9.81 2.99 L11.90 2.58 L13.28 4.96 L11.88 6.57 L11.88 7.43 L13.28 9.04 L11.90 11.42 L9.81 11.01 L9.07 11.44 L8.37 13.46 L5.63 13.46 L4.93 11.44 L4.19 11.01 L2.10 11.42 L0.72 9.04 L2.12 7.43 L2.12 6.57 L0.72 4.96 L2.10 2.58 L4.19 2.99Z" stroke="#1f1f1f" stroke-width="1.05" fill="none" stroke-linejoin="round"/><circle cx="7" cy="7" r="2.4" stroke="#1f1f1f" stroke-width="1.05" fill="none"/></svg>
<svg style="left:1614px;top:479px" width="18" height="18" viewBox="0 0 18 18"><circle cx="1.5" cy="1.5" r="0.85" fill="#262626"/><circle cx="5.1" cy="1.5" r="0.85" fill="#262626"/><circle cx="8.9" cy="1.5" r="0.85" fill="#262626"/><circle cx="12.6" cy="1.5" r="0.85" fill="#262626"/><circle cx="16.2" cy="1.5" r="0.85" fill="#262626"/><circle cx="1.5" cy="5.1" r="0.85" fill="#262626"/><circle cx="8.9" cy="5.1" r="0.85" fill="#262626"/><circle cx="16.2" cy="5.1" r="0.85" fill="#262626"/><circle cx="1.5" cy="8.9" r="0.85" fill="#262626"/><circle cx="5.1" cy="8.9" r="0.85" fill="#262626"/><circle cx="8.9" cy="8.9" r="0.85" fill="#262626"/><circle cx="12.6" cy="8.9" r="0.85" fill="#262626"/><circle cx="16.2" cy="8.9" r="0.85" fill="#262626"/><circle cx="1.5" cy="12.6" r="0.85" fill="#262626"/><circle cx="8.9" cy="12.6" r="0.85" fill="#262626"/><circle cx="16.2" cy="12.6" r="0.85" fill="#262626"/><rect x="1" y="15.6" width="16" height="1.6" rx="0.8" fill="#1f1f1f"/></svg>
<div class="t" style="left:1639.5px;top:483.2px;font-size:13px;color:#262626;transform:scaleX(0.9190);">Left axis</div>
<svg style="left:1876.2px;top:482.8px" width="14" height="14" viewBox="0 0 14 14"><path d="M4.93 2.56 L5.63 0.54 L8.37 0.54 L9.07 2.56 L9.81 2.99 L11.90 2.58 L13.28 4.96 L11.88 6.57 L11.88 7.43 L13.28 9.04 L11.90 11.42 L9.81 11.01 L9.07 11.44 L8.37 13.46 L5.63 13.46 L4.93 11.44 L4.19 11.01 L2.10 11.42 L0.72 9.04 L2.12 7.43 L2.12 6.57 L0.72 4.96 L2.10 2.58 L4.19 2.99Z" stroke="#1f1f1f" stroke-width="1.05" fill="none" stroke-linejoin="round"/><circle cx="7" cy="7" r="2.4" stroke="#1f1f1f" stroke-width="1.05" fill="none"/></svg>
<svg style="left:1614px;top:515px" width="18" height="18" viewBox="0 0 18 18"><circle cx="1.5" cy="1.5" r="0.85" fill="#262626"/><circle cx="5.1" cy="1.5" r="0.85" fill="#262626"/><circle cx="8.9" cy="1.5" r="0.85" fill="#262626"/><circle cx="12.6" cy="1.5" r="0.85" fill="#262626"/><circle cx="16.2" cy="1.5" r="0.85" fill="#262626"/><circle cx="1.5" cy="5.1" r="0.85" fill="#262626"/><circle cx="8.9" cy="5.1" r="0.85" fill="#262626"/><circle cx="16.2" cy="5.1" r="0.85" fill="#262626"/><circle cx="1.5" cy="8.9" r="0.85" fill="#262626"/><circle cx="5.1" cy="8.9" r="0.85" fill="#262626"/><circle cx="8.9" cy="8.9" r="0.85" fill="#262626"/><circle cx="12.6" cy="8.9" r="0.85" fill="#262626"/><circle cx="16.2" cy="8.9" r="0.85" fill="#262626"/><circle cx="1.5" cy="12.6" r="0.85" fill="#262626"/><circle cx="8.9" cy="12.6" r="0.85" fill="#262626"/><circle cx="16.2" cy="12.6" r="0.85" fill="#262626"/><rect x="1" y="15.6" width="16" height="1.6" rx="0.8" fill="#1f1f1f"/></svg>
<div class="t" style="left:1639.5px;top:519.2px;font-size:13px;color:#262626;transform:scaleX(0.8848);">Right axis</div>
<svg style="left:1876.2px;top:518.8px" width="14" height="14" viewBox="0 0 14 14"><path d="M4.93 2.56 L5.63 0.54 L8.37 0.54 L9.07 2.56 L9.81 2.99 L11.90 2.58 L13.28 4.96 L11.88 6.57 L11.88 7.43 L13.28 9.04 L11.90 11.42 L9.81 11.01 L9.07 11.44 L8.37 13.46 L5.63 13.46 L4.93 11.44 L4.19 11.01 L2.10 11.42 L0.72 9.04 L2.12 7.43 L2.12 6.57 L0.72 4.96 L2.10 2.58 L4.19 2.99Z" stroke="#1f1f1f" stroke-width="1.05" fill="none" stroke-linejoin="round"/><circle cx="7" cy="7" r="2.4" stroke="#1f1f1f" stroke-width="1.05" fill="none"/></svg>
<svg style="left:1842.5px;top:519.5px" width="14" height="12" viewBox="0 0 14 12"><path d="M1 6 C2.8 0.9 11.2 0.9 13 6 C11.2 11.1 2.8 11.1 1 6Z" stroke="#262626" stroke-width="1" fill="none"/><circle cx="7" cy="6" r="1.9" stroke="#262626" stroke-width="1" fill="none"/><path d="M12.6 0 L1.4 11.6" stroke="#262626" stroke-width="1"/></svg>
<div class="a" style="left:1605px;top:548px;width:300px;height:1px;background:#e8e8e8"></div>
<div class="a" style="left:1605px;top:549px;width:300px;height:35px;background:#fafafa"></div>
<div class="t" style="left:1613.2px;top:560.9px;font-size:13px;font-weight:700;color:#262626;transform:scaleX(0.8272);">Series</div>
<svg style="left:1880.5px;top:565px" width="8" height="5"><path d="M0 0 H8 L4 4.5Z" fill="#1f1f1f"/></svg>
<div class="t" style="left:1613.2px;top:601.1px;font-size:12.5px;color:#262626;transform:scaleX(0.9731);">Won</div>
<div class="a" style="left:1839px;top:595px;width:24px;height:24px;background:#ff6f61;border-radius:3px"></div>
<svg style="left:1876px;top:600px" width="14" height="14" viewBox="0 0 14 14"><path d="M4.93 2.56 L5.63 0.54 L8.37 0.54 L9.07 2.56 L9.81 2.99 L11.90 2.58 L13.28 4.96 L11.88 6.57 L11.88 7.43 L13.28 9.04 L11.90 11.42 L9.81 11.01 L9.07 11.44 L8.37 13.46 L5.63 13.46 L4.93 11.44 L4.19 11.01 L2.10 11.42 L0.72 9.04 L2.12 7.43 L2.12 6.57 L0.72 4.96 L2.10 2.58 L4.19 2.99Z" stroke="#1f1f1f" stroke-width="1.05" fill="none" stroke-linejoin="round"/><circle cx="7" cy="7" r="2.4" stroke="#1f1f1f" stroke-width="1.05" fill="none"/></svg>
<div class="t" style="left:1613.2px;top:637.1px;font-size:12.5px;color:#262626;transform:scaleX(0.9227);">Trial</div>
<div class="a" style="left:1839px;top:631px;width:24px;height:24px;background:#f7dc69;border-radius:3px"></div>
<svg style="left:1876px;top:636px" width="14" height="14" viewBox="0 0 14 14"><path d="M4.93 2.56 L5.63 0.54 L8.37 0.54 L9.07 2.56 L9.81 2.99 L11.90 2.58 L13.28 4.96 L11.88 6.57 L11.88 7.43 L13.28 9.04 L11.90 11.42 L9.81 11.01 L9.07 11.44 L8.37 13.46 L5.63 13.46 L4.93 11.44 L4.19 11.01 L2.10 11.42 L0.72 9.04 L2.12 7.43 L2.12 6.57 L0.72 4.96 L2.10 2.58 L4.19 2.99Z" stroke="#1f1f1f" stroke-width="1.05" fill="none" stroke-linejoin="round"/><circle cx="7" cy="7" r="2.4" stroke="#1f1f1f" stroke-width="1.05" fill="none"/></svg>
<div class="t" style="left:1613.2px;top:673.1px;font-size:12.5px;color:#262626;transform:scaleX(0.9447);">Demo</div>
<div class="a" style="left:1839px;top:667px;width:24px;height:24px;background:#ebbea2;border-radius:3px"></div>
<svg style="left:1876px;top:672px" width="14" height="14" viewBox="0 0 14 14"><path d="M4.93 2.56 L5.63 0.54 L8.37 0.54 L9.07 2.56 L9.81 2.99 L11.90 2.58 L13.28 4.96 L11.88 6.57 L11.88 7.43 L13.28 9.04 L11.90 11.42 L9.81 11.01 L9.07 11.44 L8.37 13.46 L5.63 13.46 L4.93 11.44 L4.19 11.01 L2.10 11.42 L0.72 9.04 L2.12 7.43 L2.12 6.57 L0.72 4.96 L2.10 2.58 L4.19 2.99Z" stroke="#1f1f1f" stroke-width="1.05" fill="none" stroke-linejoin="round"/><circle cx="7" cy="7" r="2.4" stroke="#1f1f1f" stroke-width="1.05" fill="none"/></svg>
<div class="t" style="left:1613.2px;top:709.1px;font-size:12.5px;color:#262626;transform:scaleX(0.9050);">Call</div>
<div class="a" style="left:1839px;top:703px;width:24px;height:24px;background:#f2a446;border-radius:3px"></div>
<svg style="left:1876px;top:708px" width="14" height="14" viewBox="0 0 14 14"><path d="M4.93 2.56 L5.63 0.54 L8.37 0.54 L9.07 2.56 L9.81 2.99 L11.90 2.58 L13.28 4.96 L11.88 6.57 L11.88 7.43 L13.28 9.04 L11.90 11.42 L9.81 11.01 L9.07 11.44 L8.37 13.46 L5.63 13.46 L4.93 11.44 L4.19 11.01 L2.10 11.42 L0.72 9.04 L2.12 7.43 L2.12 6.57 L0.72 4.96 L2.10 2.58 L4.19 2.99Z" stroke="#1f1f1f" stroke-width="1.05" fill="none" stroke-linejoin="round"/><circle cx="7" cy="7" r="2.4" stroke="#1f1f1f" stroke-width="1.05" fill="none"/></svg>
<div class="t" style="left:1613.2px;top:745.1px;font-size:12.5px;color:#262626;transform:scaleX(0.8994);">New</div>
<div class="a" style="left:1839px;top:739px;width:24px;height:24px;background:#45cab8;border-radius:3px"></div>
<svg style="left:1876px;top:744px" width="14" height="14" viewBox="0 0 14 14"><path d="M4.93 2.56 L5.63 0.54 L8.37 0.54 L9.07 2.56 L9.81 2.99 L11.90 2.58 L13.28 4.96 L11.88 6.57 L11.88 7.43 L13.28 9.04 L11.90 11.42 L9.81 11.01 L9.07 11.44 L8.37 13.46 L5.63 13.46 L4.93 11.44 L4.19 11.01 L2.10 11.42 L0.72 9.04 L2.12 7.43 L2.12 6.57 L0.72 4.96 L2.10 2.58 L4.19 2.99Z" stroke="#1f1f1f" stroke-width="1.05" fill="none" stroke-linejoin="round"/><circle cx="7" cy="7" r="2.4" stroke="#1f1f1f" stroke-width="1.05" fill="none"/></svg>
<div class="t" style="left:1613.2px;top:781.1px;font-size:12.5px;color:#262626;transform:scaleX(0.9179);">Lost</div>
<div class="a" style="left:1839px;top:775px;width:24px;height:24px;background:#8be1d5;border-radius:3px"></div>
<svg style="left:1876px;top:780px" width="14" height="14" viewBox="0 0 14 14"><path d="M4.93 2.56 L5.63 0.54 L8.37 0.54 L9.07 2.56 L9.81 2.99 L11.90 2.58 L13.28 4.96 L11.88 6.57 L11.88 7.43 L13.28 9.04 L11.90 11.42 L9.81 11.01 L9.07 11.44 L8.37 13.46 L5.63 13.46 L4.93 11.44 L4.19 11.01 L2.10 11.42 L0.72 9.04 L2.12 7.43 L2.12 6.57 L0.72 4.96 L2.10 2.58 L4.19 2.99Z" stroke="#1f1f1f" stroke-width="1.05" fill="none" stroke-linejoin="round"/><circle cx="7" cy="7" r="2.4" stroke="#1f1f1f" stroke-width="1.05" fill="none"/></svg>
<div class="a" style="left:1605px;top:809px;width:300px;height:1px;background:#e8e8e8"></div>
<div class="a" style="left:1389px;top:301px;width:207.5px;height:148px;background:#fff;border-radius:10px;box-shadow:0 3px 6px -4px rgba(0,0,0,.12),0 6px 16px 0 rgba(0,0,0,.08),0 9px 28px 8px rgba(0,0,0,.05)"></div>
<svg style="left:1596px;top:367px" width="9" height="16"><path d="M0 0 L8 8 L0 16Z" fill="#fff"/></svg>
<div class="a" style="left:1389.5px;top:328.5px;width:207px;height:1px;background:#f0f0f0"></div>
<div class="t" style="left:1435.3px;top:308.4px;font-size:13px;color:#2e5c81;transform:scaleX(0.9003);">Palettes</div>
<div class="a" style="left:1435px;top:327.3px;width:43px;height:2px;background:#2e5c81"></div>
<div class="t" style="left:1510.4px;top:308.4px;font-size:13px;color:#262626;transform:scaleX(0.8952);">Custom</div>
<div class="a" style="left:1405px;top:337px;width:175.5px;height:27.5px;background:#fff;border:1px solid #d9d9d9;border-radius:4px"></div>
<div class="t" style="left:1413.1px;top:344.1px;font-size:13px;color:#262626;transform:scaleX(0.9175);">My custom palette</div>
<svg style="left:1564px;top:347px" width="10" height="6"><path d="M0.5 0.5 L5 5.3 L9.5 0.5" stroke="#bfbfbf" stroke-width="1" fill="none"/></svg>
<div class="a" style="left:1409px;top:375px;width:76px;height:28px;background:#fff;border:1.5px solid #2e5c81;border-radius:3px"></div>
<div class="a" style="left:1410.9px;top:377px;width:12px;height:11.7px;background:#ff6f61"></div>
<div class="a" style="left:1422.9px;top:377px;width:12px;height:11.7px;background:#f7dc69"></div>
<div class="a" style="left:1434.9px;top:377px;width:12px;height:11.7px;background:#ebbea2"></div>
<div class="a" style="left:1446.9px;top:377px;width:12px;height:11.7px;background:#f2a446"></div>
<div class="a" style="left:1458.9px;top:377px;width:12px;height:11.7px;background:#45cab8"></div>
<div class="a" style="left:1470.9px;top:377px;width:12px;height:11.7px;background:#8be1d5"></div>
<div class="a" style="left:1501.5px;top:375px;width:75px;height:28px;background:#fff;border:1px solid #d9d9d9;border-radius:3px"></div>
<div class="a" style="left:1503px;top:377px;width:72px;height:24.4px;background:linear-gradient(90deg,#0a8a3a,#4a6a48 40%,#a22035)"></div>
<div class="a" style="left:1409.5px;top:411.5px;width:75px;height:27.5px;background:#fff;border:1px solid #d9d9d9;border-radius:3px"></div>
<div class="a" style="left:1411px;top:413px;width:72px;height:24.4px;background:linear-gradient(90deg,#5a9aaa,#9fb79a 50%,#e6cf86)"></div>
</body></html>
